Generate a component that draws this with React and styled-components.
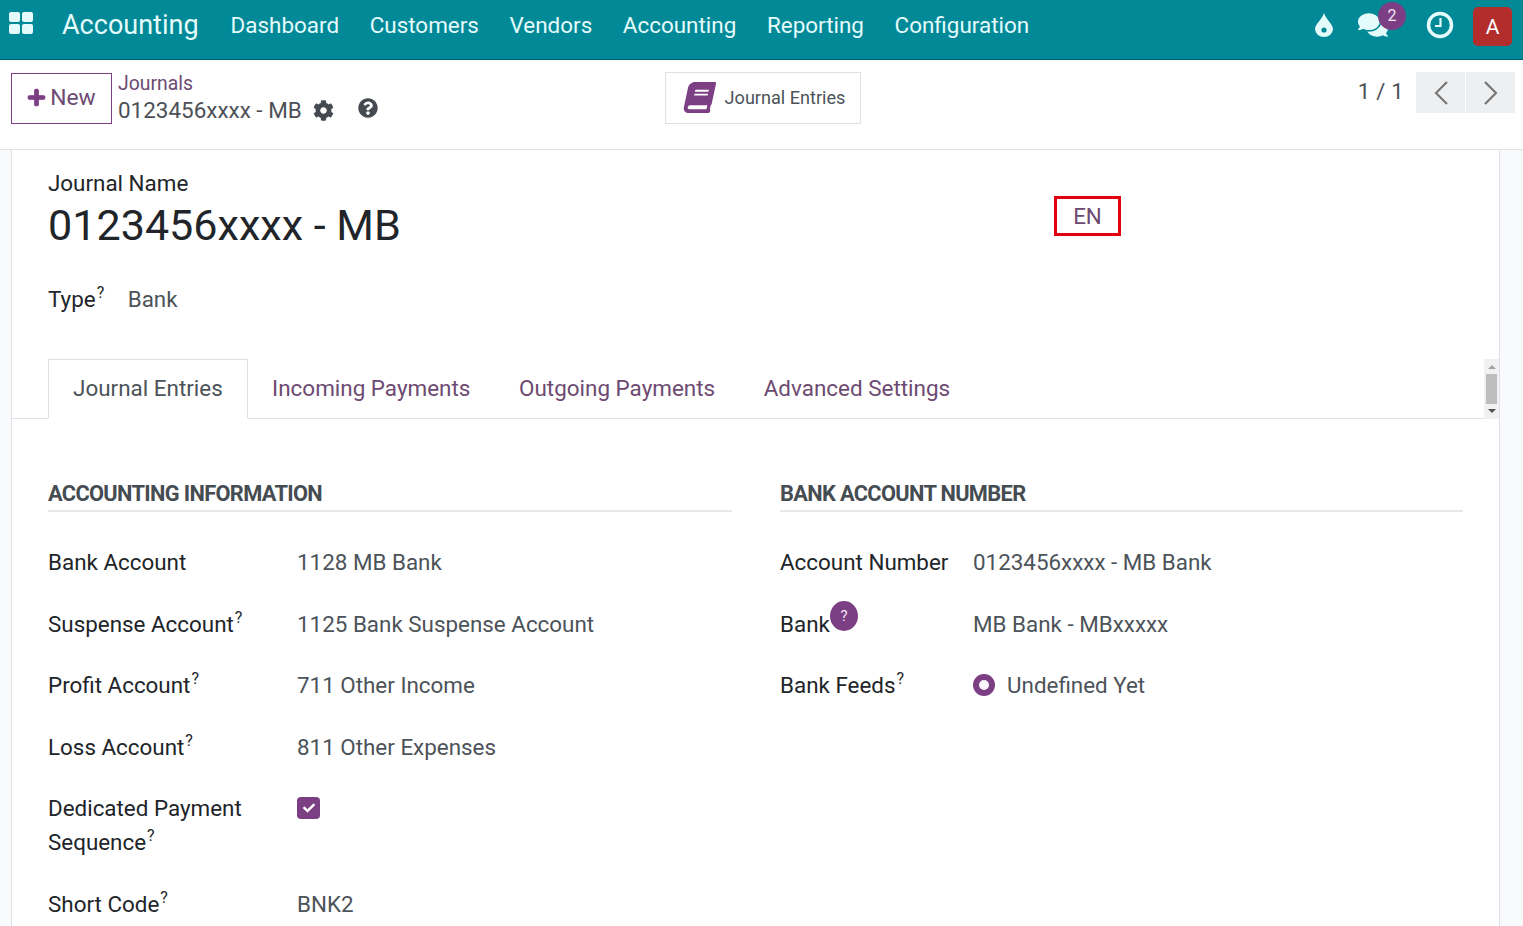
import React from 'react';
import styled, { createGlobalStyle } from 'styled-components';
import { FaComments, FaCog, FaQuestionCircle, FaBook, FaPlus, FaCheck } from 'react-icons/fa';

const GlobalStyle = createGlobalStyle`
  html, body {
    margin: 0;
    height: 100%;
    overflow: hidden;
    background: #f9fafb;
    font-family: Roboto, "Liberation Sans", sans-serif;
    color: #212529;
  }
  * { box-sizing: border-box; }
`;

const Page = styled.div`
  height: 926px;
  overflow: hidden;
  display: flex;
  flex-direction: column;
`;

const Navbar = styled.header`
  height: 60px;
  flex: none;
  display: flex;
  align-items: center;
  background: #018997;
  border-bottom: 1px solid #01606a;
  color: #e4fbfc;
  padding: 0 11px 8px 8px;
`;

const AppsIcon = styled.svg`
  width: 27px;
  height: 25px;
  margin-top: -4px;
  margin-right: 27px;
  fill: #e4fbfc;
`;

const Brand = styled.span`
  font-size: 27px;
  margin-right: 32px;
  margin-top: -2px;
`;

const NavLink = styled.a`
  font-size: 22.45px;
  margin-right: 30.6px;
  margin-top: -1px;
`;

const NavRight = styled.div`
  margin-left: auto;
  display: flex;
  align-items: center;
`;

const NavIcon = styled.span`
  position: relative;
  display: flex;
  margin-left: ${(p) => p.$gap}px;
  margin-top: -2px;
`;

const Badge = styled.span`
  position: absolute;
  top: -8px;
  left: 20px;
  width: 28px;
  height: 28px;
  border-radius: 50%;
  background: #7c3f83;
  color: #f3e6f3;
  font-size: 16px;
  display: flex;
  align-items: center;
  justify-content: center;
`;

const Avatar = styled.span`
  width: 39px;
  height: 39px;
  margin-left: 19px;
  margin-top: 2px;
  border-radius: 5px;
  background: #b32d2d;
  color: #fff;
  font-size: 21px;
  display: flex;
  align-items: center;
  justify-content: center;
`;

const ControlPanel = styled.div`
  height: 90px;
  flex: none;
  background: #fff;
  border-bottom: 1px solid #dee2e6;
  display: grid;
  grid-template-columns: 1fr auto 1fr;
  padding: 12px 8px 0 11px;
`;

const PanelLeft = styled.div`
  display: flex;
  align-items: flex-start;
`;

const NewButton = styled.button`
  width: 101px;
  height: 51px;
  margin-top: 1px;
  padding: 0 0 2px;
  border: 1px solid #7c3f83;
  background: #fff;
  color: #6d4a72;
  font: 400 22.8px Roboto, sans-serif;
  display: flex;
  align-items: center;
  justify-content: center;
  gap: 4px;
  svg {
    color: #7c3f83;
    stroke: #7c3f83;
    stroke-width: 30px;
  }
`;

const Crumbs = styled.div`
  margin-left: 6px;
  font-size: 22.45px;
  line-height: 27px;
`;

const CrumbLink = styled.div`
  color: #6d4a72;
  font-size: 19.4px;
  line-height: 24px;
`;

const CrumbCurrent = styled.div`
  display: flex;
  align-items: center;
  color: #4c5056;
  margin-top: 1px;
`;

const CrumbIcon = styled.span`
  display: flex;
  margin-left: ${(p) => p.$gap}px;
  margin-top: ${(p) => p.$lift || 0}px;
  color: #454a50;
`;

const StatButton = styled.button`
  width: 196px;
  height: 52px;
  border: 1px solid #dee2e6;
  background: #fff;
  color: #4c5359;
  font: 400 18.1px Roboto, sans-serif;
  display: flex;
  align-items: center;
  justify-content: center;
  gap: 10px;
  padding: 0 0 2px 3px;
  svg { color: #7c3f83; }
`;

const BookIcon = styled(FaBook)`
  transform: skewX(-12deg);
`;

const PanelRight = styled.div`
  display: flex;
  justify-content: flex-end;
  align-items: flex-start;
`;

const PagerText = styled.span`
  font-size: 22px;
  letter-spacing: 0.3px;
  color: #4c5056;
  margin: 7px 12px 0 0;
`;

const PagerButton = styled.button`
  width: 49px;
  height: 41px;
  border: none;
  padding: 0;
  margin-left: ${(p) => (p.$next ? 1 : 0)}px;
  background: #eeeff1;
  display: flex;
  align-items: center;
  justify-content: center;
`;

const Content = styled.div`
  flex: 1;
  padding: 0 23px 0 11px;
  min-height: 0;
`;

const Sheet = styled.main`
  height: 100%;
  background: #fff;
  border-left: 1px solid #dee2e6;
  border-right: 1px solid #dee2e6;
  padding-top: 20px;
`;

const TitleBlock = styled.div`
  padding: 0 36px;
  display: flex;
  justify-content: space-between;
  height: 114px;
`;

const TitleLabel = styled.div`
  font-size: 22.4px;
  line-height: 26px;
`;

const Title = styled.h1`
  margin: 5px 0 0;
  font-size: 43.1px;
  line-height: 50px;
  font-weight: 400;
`;

const LangBox = styled.div`
  width: 67px;
  height: 40px;
  border: 3px solid #e3000f;
  margin: 26px 342px 0 0;
  display: flex;
  align-items: center;
  justify-content: center;
  font-size: 22.4px;
  color: #6d4a72;
`;

const TypeRow = styled.div`
  padding: 2px 36px 0;
  display: flex;
  align-items: baseline;
  font-size: 22.4px;
  height: 75px;
`;

const TypeValue = styled.span`
  margin-left: 23.5px;
  color: #4c5359;
`;

const Sup = styled.sup`
  font-size: 16px;
  line-height: 0;
  vertical-align: 9px;
  margin-left: 1px;
`;

const Tabs = styled.nav`
  position: relative;
  height: 60px;
  display: flex;
  align-items: flex-start;
  padding-left: 36px;
  border-bottom: 1px solid #dee2e6;
`;

const Tab = styled.a`
  height: ${(p) => (p.$active ? 60 : 59)}px;
  padding: 0 ${(p) => (p.$active ? 24 : 23.3)}px 2px;
  display: flex;
  align-items: center;
  font-size: 22.45px;
  color: ${(p) => (p.$active ? '#4c5359' : '#6d4a72')};
  background: ${(p) => (p.$active ? '#fff' : 'none')};
  border: 1px solid ${(p) => (p.$active ? '#dee2e6' : 'transparent')};
  border-bottom: ${(p) => (p.$active ? '1px solid #fff' : 'none')};
`;

const Scrollbar = styled.div`
  position: absolute;
  right: 0;
  top: 0;
  width: 15px;
  height: 60px;
  background: #f1f1f1;
  display: flex;
  flex-direction: column;
  align-items: center;
  justify-content: space-between;
  padding: 6px 0;
`;

const Thumb = styled.div`
  width: 11px;
  height: 30px;
  background: #bdbdbd;
`;

const Arrow = styled.div`
  width: 0;
  height: 0;
  border-left: 4px solid transparent;
  border-right: 4px solid transparent;
  border-${(p) => (p.$up ? 'bottom' : 'top')}: 4px solid ${(p) => (p.$up ? '#a3a3a3' : '#505050')};
`;

const Columns = styled.div`
  display: grid;
  grid-template-columns: 684px 683px;
  column-gap: 48px;
  padding: 60px 36px 0;
`;

const SectionTitle = styled.h2`
  margin: 0 0 33.2px;
  height: 33px;
  font-size: 21.8px;
  line-height: 29px;
  font-weight: 700;
  letter-spacing: -0.66px;
  color: #454c52;
  border-bottom: 2px solid #e6e8ea;
`;

const FieldRow = styled.div`
  display: grid;
  grid-template-columns: ${(p) => p.$label}px 1fr;
  font-size: 22.4px;
  line-height: 34px;
  margin-bottom: 27.5px;
`;

const FieldLabel = styled.label`
  position: relative;
`;

const FieldValue = styled.div`
  display: flex;
  align-items: center;
  color: #4c5359;
`;

const HelpDot = styled.span`
  position: absolute;
  left: 50px;
  top: -6px;
  width: 28px;
  height: 30px;
  border-radius: 50%;
  background: #7c3f83;
  color: #f3e6f3;
  font-size: 15px;
  line-height: 30px;
  text-align: center;
`;

const Radio = styled.span`
  width: 22px;
  height: 22px;
  border-radius: 50%;
  border: 6px solid #7c3f83;
  background: #fbf5fb;
  margin-right: 12px;
`;

const CheckBox = styled.span`
  width: 23px;
  height: 22px;
  border-radius: 4px;
  background: #7c3f83;
  color: #fff;
  display: flex;
  align-items: center;
  justify-content: center;
  margin-top: -34px;
`;

const leftFields = [
  { label: 'Bank Account', value: '1128 MB Bank' },
  { label: 'Suspense Account', help: true, value: '1125 Bank Suspense Account' },
  { label: 'Profit Account', help: true, value: '711 Other Income' },
  { label: 'Loss Account', help: true, value: '811 Other Expenses' },
  { label: 'Dedicated Payment Sequence', help: true, check: true },
  { label: 'Short Code', help: true, value: 'BNK2' },
];

const Chevron = ({ dir }) => (
  <svg width="14" height="24" viewBox="0 0 14 24" fill="none" stroke="#777" strokeWidth="2.2">
    <path d={dir === 'left' ? 'M13 1 2 12l11 11' : 'M1 1l11 11L1 23'} />
  </svg>
);

const DropIcon = () => (
  <svg width="18" height="24" viewBox="0 0 18 24">
    <path fill="#e4fbfc" d="M9 0c1 3.600 3.400 6.200 5.600 9.200C16.300 11.400 18 13.400 18 16a9 8 0 0 1-18 0c0-2.600 1.700-4.600 3.400-6.800C5.600 6.200 8 3.600 9 0z" />
    <circle cx="9" cy="17" r="2.600" fill="#018997" />
  </svg>
);

export default function App() {
  return (
    <Page>
      <GlobalStyle />
      <Navbar>
        <AppsIcon viewBox="0 0 27 25">
          <rect x="1" y="1" width="11" height="10" rx="2" />
          <rect x="14" y="1" width="11" height="10" rx="2" />
          <rect x="1" y="13" width="11" height="10" rx="2" />
          <rect x="14" y="13" width="11" height="10" rx="2" />
        </AppsIcon>
        <Brand>Accounting</Brand>
        <NavLink>Dashboard</NavLink>
        <NavLink>Customers</NavLink>
        <NavLink>Vendors</NavLink>
        <NavLink>Accounting</NavLink>
        <NavLink>Reporting</NavLink>
        <NavLink>Configuration</NavLink>
        <NavRight>
          <NavIcon $gap={0}><DropIcon /></NavIcon>
          <NavIcon $gap={25}>
            <FaComments size={30} />
            <Badge>2</Badge>
          </NavIcon>
          <NavIcon $gap={38}>
            <svg width="28" height="28" viewBox="0 0 28 28" fill="none" stroke="#e4fbfc">
              <circle cx="14" cy="14" r="11.5" strokeWidth="3.5" />
              <path d="M14.5 7v8H9" strokeWidth="2.2" />
            </svg>
          </NavIcon>
          <Avatar>A</Avatar>
        </NavRight>
      </Navbar>

      <ControlPanel>
        <PanelLeft>
          <NewButton><FaPlus size={19} />New</NewButton>
          <Crumbs>
            <CrumbLink>Journals</CrumbLink>
            <CrumbCurrent>
              0123456xxxx - MB
              <CrumbIcon $gap={11}><FaCog size={21} /></CrumbIcon>
              <CrumbIcon $gap={24} $lift={-5}><FaQuestionCircle size={20} /></CrumbIcon>
            </CrumbCurrent>
          </Crumbs>
        </PanelLeft>
        <StatButton><BookIcon size={31} />Journal Entries</StatButton>
        <PanelRight>
          <PagerText>1 / 1</PagerText>
          <PagerButton><Chevron dir="left" /></PagerButton>
          <PagerButton $next><Chevron dir="right" /></PagerButton>
        </PanelRight>
      </ControlPanel>

      <Content>
        <Sheet>
          <TitleBlock>
            <div>
              <TitleLabel>Journal Name</TitleLabel>
              <Title>0123456xxxx - MB</Title>
            </div>
            <LangBox>EN</LangBox>
          </TitleBlock>
          <TypeRow>
            <span>Type<Sup>?</Sup></span>
            <TypeValue>Bank</TypeValue>
          </TypeRow>
          <Tabs>
            <Tab $active>Journal Entries</Tab>
            <Tab>Incoming Payments</Tab>
            <Tab>Outgoing Payments</Tab>
            <Tab>Advanced Settings</Tab>
            <Scrollbar>
              <Arrow $up />
              <Thumb />
              <Arrow />
            </Scrollbar>
          </Tabs>
          <Columns>
            <section>
              <SectionTitle>ACCOUNTING INFORMATION</SectionTitle>
              {leftFields.map((f) => (
                <FieldRow key={f.label} $label={249}>
                  <FieldLabel>{f.label}{f.help && <Sup>?</Sup>}</FieldLabel>
                  <FieldValue>
                    {f.check ? <CheckBox><FaCheck size={12} /></CheckBox> : f.value}
                  </FieldValue>
                </FieldRow>
              ))}
            </section>
            <section>
              <SectionTitle>BANK ACCOUNT NUMBER</SectionTitle>
              <FieldRow $label={193}>
                <FieldLabel>Account Number</FieldLabel>
                <FieldValue>0123456xxxx - MB Bank</FieldValue>
              </FieldRow>
              <FieldRow $label={193}>
                <FieldLabel>Bank<HelpDot>?</HelpDot></FieldLabel>
                <FieldValue>MB Bank - MBxxxxx</FieldValue>
              </FieldRow>
              <FieldRow $label={193}>
                <FieldLabel>Bank Feeds<Sup>?</Sup></FieldLabel>
                <FieldValue><Radio />Undefined Yet</FieldValue>
              </FieldRow>
            </section>
          </Columns>
        </Sheet>
      </Content>
    </Page>
  );
}
